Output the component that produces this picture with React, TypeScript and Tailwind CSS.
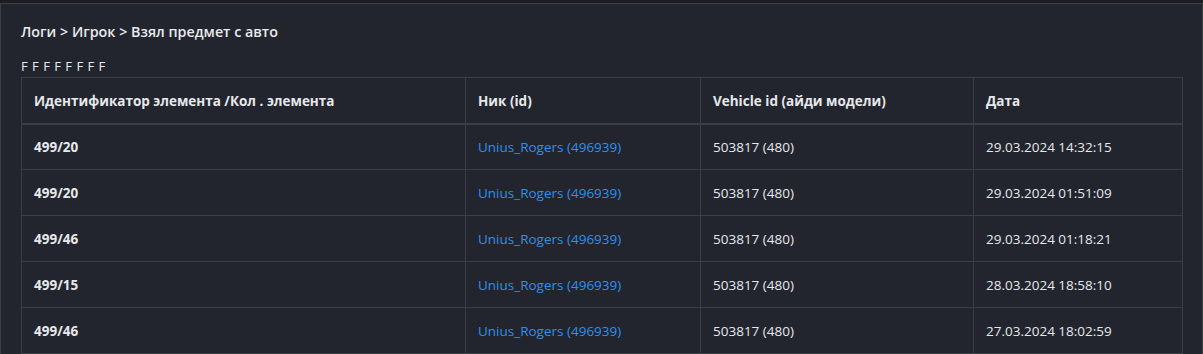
const rows = [
  { item: '499/20', nick: 'Unius_Rogers (496939)', vehicle: '503817 (480)', date: '29.03.2024 14:32:15' },
  { item: '499/20', nick: 'Unius_Rogers (496939)', vehicle: '503817 (480)', date: '29.03.2024 01:51:09' },
  { item: '499/46', nick: 'Unius_Rogers (496939)', vehicle: '503817 (480)', date: '29.03.2024 01:18:21' },
  { item: '499/15', nick: 'Unius_Rogers (496939)', vehicle: '503817 (480)', date: '28.03.2024 18:58:10' },
  { item: '499/46', nick: 'Unius_Rogers (496939)', vehicle: '503817 (480)', date: '27.03.2024 18:02:59' },
];

export default function App() {
  return (
    <div className="h-[354px] w-[1203px] overflow-hidden bg-[#1b1d22] pt-[3px] font-['Open_Sans','Noto_Sans',sans-serif] text-[13.5px] text-[#e6e8ec]">
      <div className="h-full border-l border-r border-t border-[#3b3e45] bg-[#22252d] px-5 pt-[21px]">
        {/* хлебные крошки */}
        <div className="text-[14.3px] font-semibold leading-[14px] text-[#e8eaee]">
          Логи &gt; Игрок &gt; Взял предмет с авто
        </div>
        <div className="mb-[3px] mt-[20px] text-[13px] leading-[15px] tracking-[0.5px] text-[#e8eaee]">F F F F F F F F</div>

        <table className="w-[1161px] table-fixed border-collapse">
          <colgroup>
            <col className="w-[444px]" />
            <col className="w-[235px]" />
            <col className="w-[273px]" />
            <col className="w-[209px]" />
          </colgroup>
          <thead>
            <tr className="h-[46px] border-b-2 border-[#3b3e45]">
              <th className="border border-[#3b3e45] px-3 pt-px text-left font-bold">Идентификатор элемента /Кол . элемента</th>
              <th className="border border-[#3b3e45] px-3 pt-px text-left font-bold">Ник (id)</th>
              <th className="border border-[#3b3e45] px-3 pt-px text-left font-bold">Vehicle id (айди модели)</th>
              <th className="border border-[#3b3e45] px-3 pt-px text-left font-bold">Дата</th>
            </tr>
          </thead>
          <tbody>
            {rows.map((r, i) => (
              <tr key={i} className="h-[46px]">
                <td className="border border-[#3b3e45] px-3 pt-px font-bold">{r.item}</td>
                <td className="border border-[#3b3e45] px-3 pt-px text-[#2d90f2]">{r.nick}</td>
                <td className="border border-[#3b3e45] px-3 pt-px">{r.vehicle}</td>
                <td className="border border-[#3b3e45] px-3 pt-px">{r.date}</td>
              </tr>
            ))}
          </tbody>
        </table>
      </div>
    </div>
  );
}
